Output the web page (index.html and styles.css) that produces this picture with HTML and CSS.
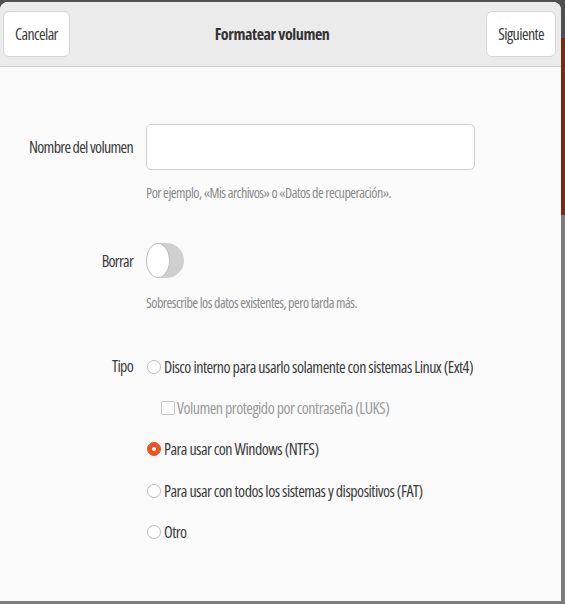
FILE: index.html
```html
<!DOCTYPE html>
<html lang="es">
<head>
<meta charset="utf-8">
<title>Formatear volumen</title>
<link rel="stylesheet" href="styles.css">
</head>
<body>
<div class="dialog">
  <header class="header">
    <button class="btn">Cancelar</button>
    <div class="title">Formatear volumen</div>
    <button class="btn">Siguiente</button>
  </header>
  <main class="form">
    <div class="label row-name">Nombre del volumen</div>
    <div class="input row-name"></div>
    <div class="hint hint-name">Por ejemplo, «Mis archivos» o «Datos de recuperación».</div>

    <div class="label row-erase">Borrar</div>
    <div class="row-erase"><div class="switch"><span class="knob"></span></div></div>
    <div class="hint hint-erase">Sobrescribe los datos existentes, pero tarda más.</div>

    <div class="label row-type">Tipo</div>
    <div class="options row-type">
      <div class="opt"><span class="radio"></span>Disco interno para usarlo solamente con sistemas Linux (Ext4)</div>
      <div class="opt sub disabled"><span class="check"></span>Volumen protegido por contraseña (LUKS)</div>
      <div class="opt"><span class="radio on"></span>Para usar con Windows (NTFS)</div>
      <div class="opt"><span class="radio"></span>Para usar con todos los sistemas y dispositivos (FAT)</div>
      <div class="opt"><span class="radio"></span>Otro</div>
    </div>
  </main>
</div>
</body>
</html>
```

FILE: styles.css
```css
html, body {
  margin: 0;
  padding: 0;
  height: 100%;
}
body {
  background: linear-gradient(to bottom, #505050 0, #505050 38px, #7a2a10 38px, #7a2a10 215px, #7c7c7c 215px);
  font-family: "Open Sans", "Noto Sans", sans-serif;
  font-stretch: 75%;
  overflow: hidden;
}
.dialog {
  margin-top: 2px;
  width: 561px;
  height: 599px;
  background: #fafafa;
  border-radius: 8px 8px 0 0;
  overflow: hidden;
  display: flex;
  flex-direction: column;
}
.header {
  height: 64px;
  background: #ebebeb;
  border-bottom: 1px solid #cdcdcd;
  display: flex;
  align-items: center;
  padding: 0 5px 0 3px;
  box-sizing: content-box;
}
.btn {
  height: 46px;
  background: #fff;
  border: 1px solid #d6d6d6;
  border-radius: 6px;
  font-family: inherit;
  font-stretch: 75%;
  font-size: 16px;
  letter-spacing: -0.6px;
  color: #3c3c3c;
  padding: 0 11px;
}
.title {
  flex: 1;
  text-align: center;
  font-weight: bold;
  font-size: 16px;
  letter-spacing: -0.4px;
  color: #333;
  padding-right: 12px;
}
.form {
  display: grid;
  grid-template-columns: 133px 1fr;
  column-gap: 13px;
  align-items: center;
  padding-top: 57px;
  color: #3c3c3c;
  font-size: 16px;
  letter-spacing: -0.5px;
  line-height: 20px;
}
.label {
  grid-column: 1;
  text-align: right;
  white-space: nowrap;
  letter-spacing: -0.7px;
}
.input {
  grid-column: 2;
  width: 327px;
  height: 44px;
  background: #fff;
  border: 1px solid #cfcfcf;
  border-radius: 5px;
}
.hint {
  grid-column: 2;
  color: #8a8a8a;
  font-size: 14px;
  letter-spacing: -0.5px;
  line-height: 18px;
  margin-top: 14px;
  white-space: nowrap;
}
.hint-erase {
  margin-top: 16px;
}
.row-erase {
  margin-top: 41px;
}
.switch {
  width: 38px;
  height: 35px;
  border-radius: 18px;
  background: #cfcfcf;
  position: relative;
}
.knob {
  position: absolute;
  left: 0;
  top: 0;
  width: 22px;
  height: 33px;
  border-radius: 50%;
  background: #fff;
  border: 1px solid #bdbdbd;
}
.row-type {
  margin-top: 34px;
}
.label.row-type {
  align-self: start;
  line-height: 41px;
}
.options {
  display: flex;
  flex-direction: column;
}
.opt {
  height: 41.3px;
  display: flex;
  align-items: center;
  color: #3c3c3c;
  white-space: nowrap;
}
.opt.sub {
  padding-left: 15px;
}
.opt.disabled {
  color: #9a9a9a;
}
.radio {
  width: 12px;
  height: 12px;
  border: 1px solid #bdbdbd;
  border-radius: 50%;
  background: #fff;
  margin: 0 3px 0 1px;
  flex: none;
  position: relative;
}
.radio.on {
  background: #e95420;
  border-color: #e95420;
}
.radio.on::after {
  content: "";
  position: absolute;
  left: 4px;
  top: 4px;
  width: 4px;
  height: 4px;
  border-radius: 50%;
  background: #fff;
}
.check {
  width: 12px;
  height: 12px;
  border: 1px solid #c4c4c4;
  border-radius: 2px;
  background: #fff;
  margin-right: 2px;
  flex: none;
}
```
